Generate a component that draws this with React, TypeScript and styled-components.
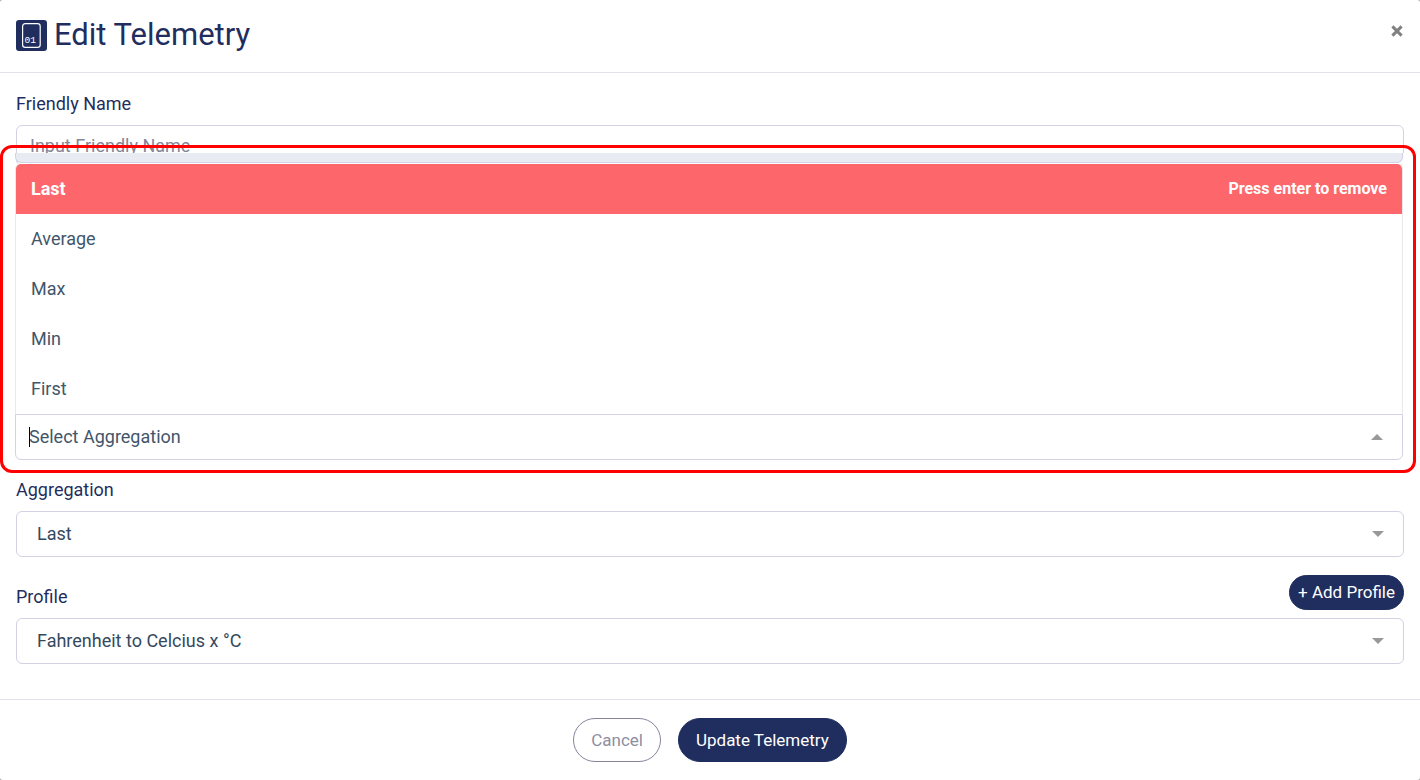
import React from "react";
import styled, { createGlobalStyle } from "styled-components";

const navy = "#1f2e5e";
const line = "#d2d2e4";
const slate = "#41566a";

const GlobalStyle = createGlobalStyle`
  *, *::before, *::after { box-sizing: border-box; }
  body { margin: 0; background: #b4b4b4; }
  body, button, input, select { font-family: Roboto, "Liberation Sans", sans-serif; font-size: 18px; }
`;

const Dialog = styled.form`
  display: flex;
  flex-direction: column;
  min-height: 100vh;
  background: #fff;
  border-radius: 3px;
  color: ${navy};
`;

const Header = styled.header`
  display: flex;
  align-items: flex-start;
  justify-content: space-between;
  padding: 15px 16px 17px;
  border-bottom: 1px solid #e2e2ef;
`;

const Title = styled.h1`
  display: flex;
  align-items: center;
  gap: 7px;
  margin: 0;
  font-size: 31px;
  line-height: 40px;
  font-weight: 400;
`;

const CloseButton = styled.button`
  display: flex;
  margin-top: 10px;
  padding: 0;
  border: 0;
  background: none;
  cursor: pointer;
`;

const Body = styled.main`
  display: flex;
  flex-direction: column;
  gap: 18px;
  padding: 19px 16px 35px;
`;

const Field = styled.div`
  display: flex;
  flex-direction: column;
  gap: 8px;
`;

const LabelRow = styled.div`
  display: flex;
  align-items: flex-end;
  justify-content: space-between;
`;

const Label = styled.label`
  padding-bottom: 2px;
  line-height: 23px;
`;

const TextInput = styled.input`
  width: 100%;
  height: 41px;
  padding: 0 13px;
  border: 1px solid ${line};
  border-radius: 6px;
  background: #fff;
  color: ${slate};
  outline: none;
  &::placeholder { color: #85859a; opacity: 1; }
`;

const Picker = styled.div`
  position: relative;
  margin: -31px 1px 0 -1px;
`;

const PickerStrip = styled.div`
  height: 10px;
  background: #e9ebf2;
  border: 1px solid ${line};
  border-top: 0;
  border-radius: 0 0 6px 6px;
  box-shadow: 1px 0 0 #fff, 2px 2px 0 #fff;
`;

const OptionList = styled.ul`
  margin: 0;
  padding: 1px 0 0;
  list-style: none;
  background: #fff;
  border: 1px solid #e8e8e8;
  border-width: 0 1px;
  border-radius: 6px 6px 0 0;
`;

const Option = styled.li<{ $active?: boolean }>`
  display: flex;
  align-items: center;
  justify-content: space-between;
  height: 50px;
  padding: 0 15px 2px;
  border-radius: ${(p) => (p.$active ? "5px 5px 0 0" : "0")};
  background: ${(p) => (p.$active ? "#fd676c" : "#fff")};
  color: ${(p) => (p.$active ? "#fff" : slate)};
  font-weight: ${(p) => (p.$active ? 700 : 400)};
`;

const Hint = styled.span`
  font-size: 16px;
`;

const Control = styled.div`
  display: grid;
  align-items: center;
  & > * { grid-area: 1 / 1; }
`;

const SearchInput = styled.input`
  width: 100%;
  height: 46px;
  padding: 0 13px 1px;
  border: 1px solid ${line};
  border-radius: 0 0 6px 6px;
  background: #fff;
  color: ${slate};
  outline: none;
  &::placeholder { color: ${slate}; opacity: 1; }
`;

const Caret = styled.span`
  width: 1px;
  height: 20px;
  margin-left: 14px;
  background: #000;
`;

const Select = styled.select`
  appearance: none;
  width: 100%;
  height: 46px;
  padding: 0 20px 1px;
  border: 1px solid ${line};
  border-radius: 6px;
  background: #fff;
  color: #35495e;
  outline: none;
`;

const Arrow = styled.svg<{ $up?: boolean }>`
  justify-self: end;
  margin-right: 20px;
  pointer-events: none;
  transform: ${(p) => (p.$up ? "rotate(180deg)" : "none")};
`;

const Highlight = styled.div`
  position: absolute;
  inset: -8px -13px -13px -15px;
  border: 3px solid #fe0000;
  border-radius: 12px;
  pointer-events: none;
`;

const Pill = styled.button<{ $kind: "solid" | "outline"; $small?: boolean }>`
  height: ${(p) => (p.$small ? "35px" : "44px")};
  padding: ${(p) => (p.$small ? "0 8px 2px" : "0 17px")};
  border: 1px solid ${(p) => (p.$kind === "solid" ? navy : "#85859a")};
  border-radius: 22px;
  background: ${(p) => (p.$kind === "solid" ? navy : "#fff")};
  color: ${(p) => (p.$kind === "solid" ? "#fff" : "#8e8ea2")};
  font-size: 17px;
  cursor: pointer;
`;

const Footer = styled.footer`
  display: flex;
  justify-content: center;
  gap: 17px;
  padding: 18px 16px;
  border-top: 1px solid #e2e2ea;
`;

const TelemetryIcon = () => (
  <svg width="31" height="31" viewBox="0 0 31 31" aria-hidden="true">
    <rect width="31" height="31" rx="3" fill={navy} />
    <rect x="6.6" y="3.6" width="17.6" height="23.8" rx="2.6" fill="none" stroke="#fff" strokeWidth="1.2" />
    <text x="8.6" y="23" fill="#fff" fontFamily="Liberation Mono, monospace" fontSize="9.6">01</text>
  </svg>
);

const SelectArrow = ({ up }: { up?: boolean }) => (
  <Arrow $up={up} width="12" height="6" viewBox="0 0 12 6" aria-hidden="true">
    <path d="M0 0h12L6 6z" fill="#999" />
  </Arrow>
);

const aggregations = ["Last", "Average", "Max", "Min", "First"];

export default function App() {
  return (
    <>
      <GlobalStyle />
      <Dialog onSubmit={(e) => e.preventDefault()}>
        <Header>
          <Title>
            <TelemetryIcon />
            Edit Telemetry
          </Title>
          <CloseButton type="button" aria-label="Close">
            <svg width="13" height="13" viewBox="0 0 13 13" aria-hidden="true">
              <path d="M1.4 1.4l9.2 9.2M10.6 1.4l-9.2 9.2" stroke="#808080" strokeWidth="3" />
            </svg>
          </CloseButton>
        </Header>
        <Body>
          <Field>
            <Label htmlFor="friendly-name">Friendly Name</Label>
            <TextInput id="friendly-name" placeholder="Input Friendly Name" />
          </Field>
          <Picker>
            <PickerStrip />
            <OptionList id="aggregation-options" role="listbox">
              {aggregations.map((name, i) => (
                <Option key={name} role="option" aria-selected={i === 0} $active={i === 0}>
                  {name}
                  {i === 0 && <Hint>Press enter to remove</Hint>}
                </Option>
              ))}
            </OptionList>
            <Control>
              <SearchInput
                role="combobox"
                aria-expanded="true"
                aria-controls="aggregation-options"
                aria-label="Select Aggregation"
                placeholder="Select Aggregation"
              />
              <Caret />
              <SelectArrow up />
            </Control>
            <Highlight />
          </Picker>
          <Field>
            <Label htmlFor="aggregation">Aggregation</Label>
            <Control>
              <Select id="aggregation" defaultValue="Last">
                {aggregations.map((name) => (
                  <option key={name}>{name}</option>
                ))}
              </Select>
              <SelectArrow />
            </Control>
          </Field>
          <Field>
            <LabelRow>
              <Label htmlFor="profile">Profile</Label>
              <Pill type="button" $kind="solid" $small>+ Add Profile</Pill>
            </LabelRow>
            <Control>
              <Select id="profile">
                <option>Fahrenheit to Celcius x °C</option>
              </Select>
              <SelectArrow />
            </Control>
          </Field>
        </Body>
        <Footer>
          <Pill type="button" $kind="outline">Cancel</Pill>
          <Pill type="submit" $kind="solid">Update Telemetry</Pill>
        </Footer>
      </Dialog>
    </>
  );
}
